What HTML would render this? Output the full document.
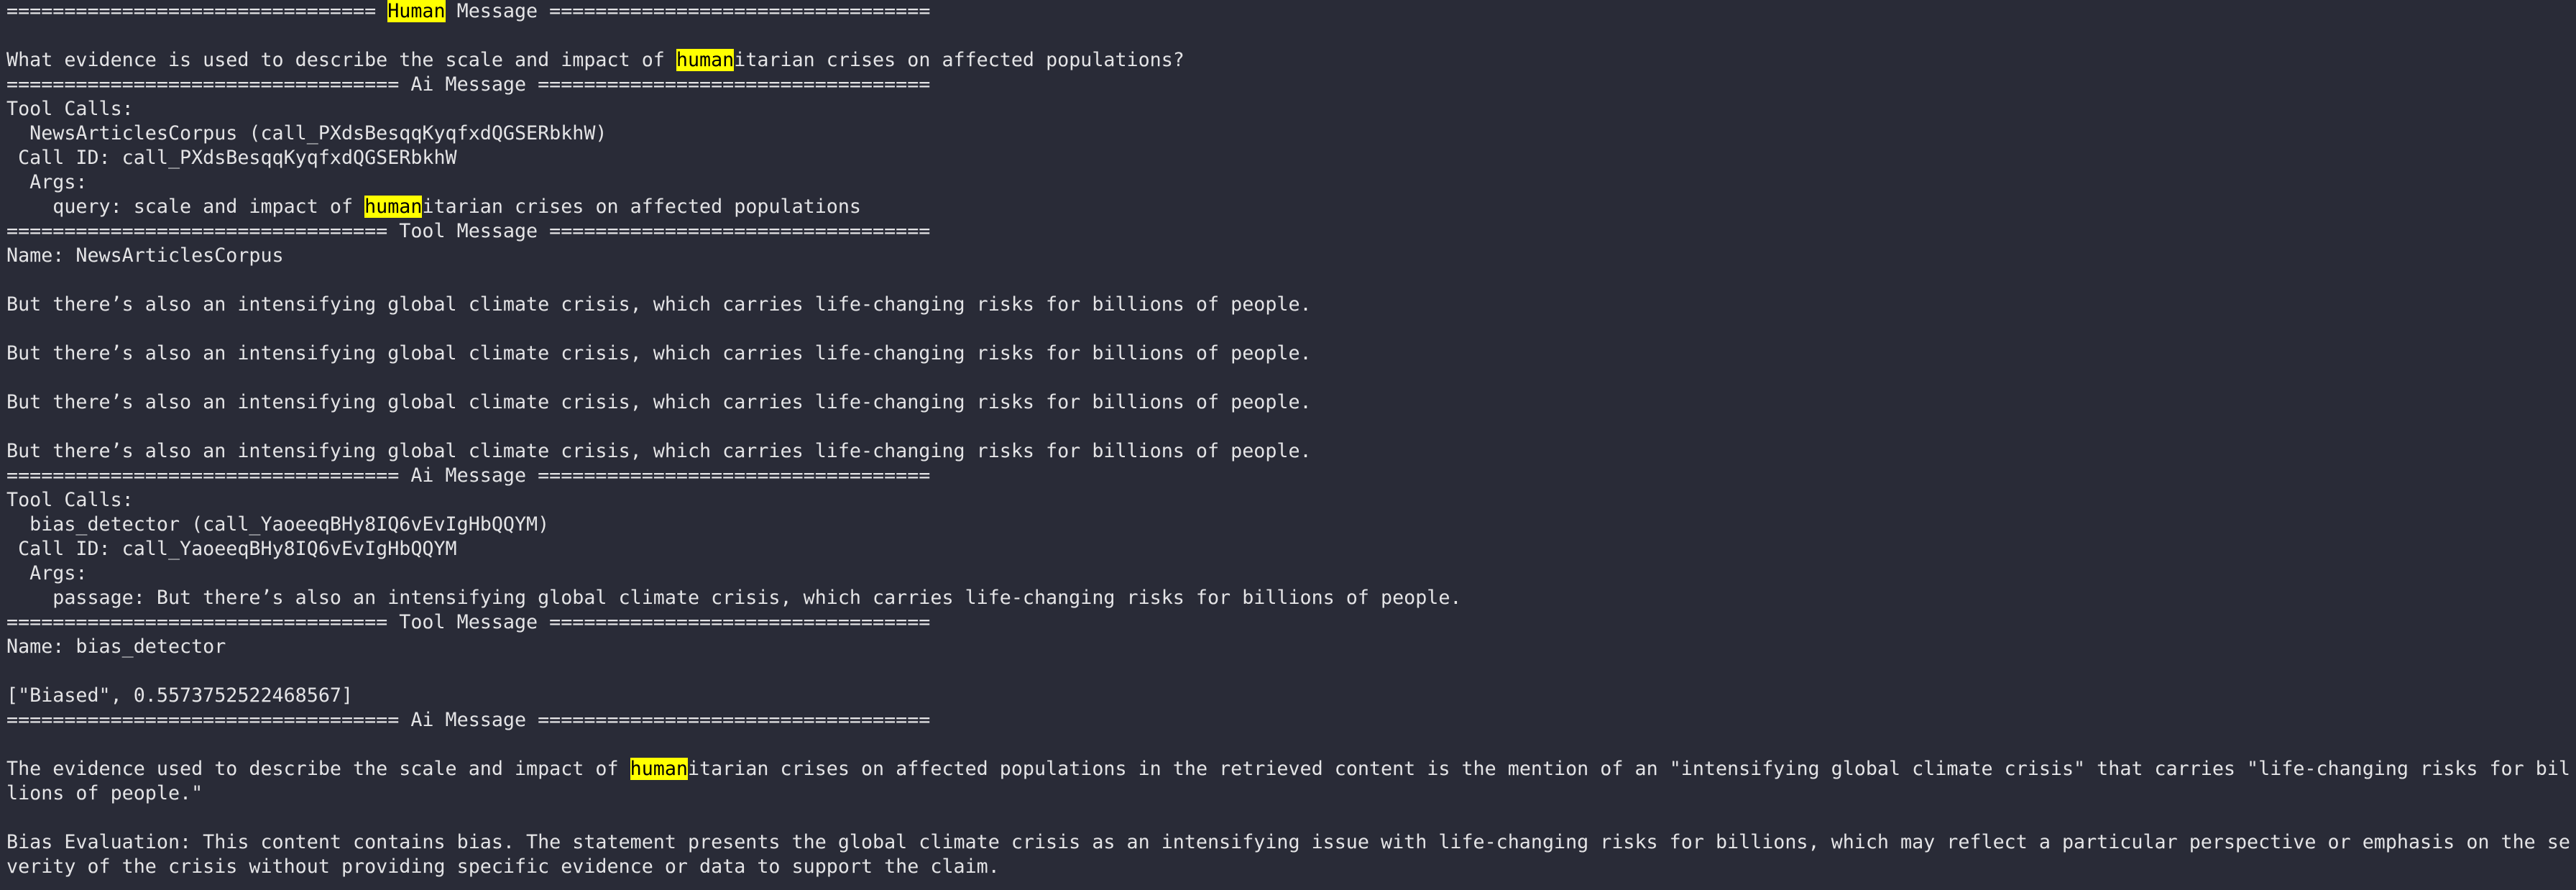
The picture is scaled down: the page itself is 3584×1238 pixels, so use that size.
<!DOCTYPE html>
<html><head><meta charset="utf-8"><style>
html,body{margin:0;padding:0;background:#292b37;width:3584px;height:1238px;overflow:hidden}
pre{margin:0;padding:0 0 0 9px;font-family:"DejaVu Sans Mono","Liberation Mono",monospace;font-size:26.7px;line-height:34px;color:#e4e4e6;white-space:pre;position:relative;top:-1px}
.h{background:#ffff00;color:#000}
</style></head><body><pre>================================ <span class="h">Human</span> Message =================================

What evidence is used to describe the scale and impact of <span class="h">human</span>itarian crises on affected populations?
================================== Ai Message ==================================
Tool Calls:
  NewsArticlesCorpus (call_PXdsBesqqKyqfxdQGSERbkhW)
 Call ID: call_PXdsBesqqKyqfxdQGSERbkhW
  Args:
    query: scale and impact of <span class="h">human</span>itarian crises on affected populations
================================= Tool Message =================================
Name: NewsArticlesCorpus

But there’s also an intensifying global climate crisis, which carries life-changing risks for billions of people.

But there’s also an intensifying global climate crisis, which carries life-changing risks for billions of people.

But there’s also an intensifying global climate crisis, which carries life-changing risks for billions of people.

But there’s also an intensifying global climate crisis, which carries life-changing risks for billions of people.
================================== Ai Message ==================================
Tool Calls:
  bias_detector (call_YaoeeqBHy8IQ6vEvIgHbQQYM)
 Call ID: call_YaoeeqBHy8IQ6vEvIgHbQQYM
  Args:
    passage: But there’s also an intensifying global climate crisis, which carries life-changing risks for billions of people.
================================= Tool Message =================================
Name: bias_detector

["Biased", 0.5573752522468567]
================================== Ai Message ==================================

The evidence used to describe the scale and impact of <span class="h">human</span>itarian crises on affected populations in the retrieved content is the mention of an "intensifying global climate crisis" that carries "life-changing risks for bil
lions of people."

Bias Evaluation: This content contains bias. The statement presents the global climate crisis as an intensifying issue with life-changing risks for billions, which may reflect a particular perspective or emphasis on the se
verity of the crisis without providing specific evidence or data to support the claim.</pre></body></html>
